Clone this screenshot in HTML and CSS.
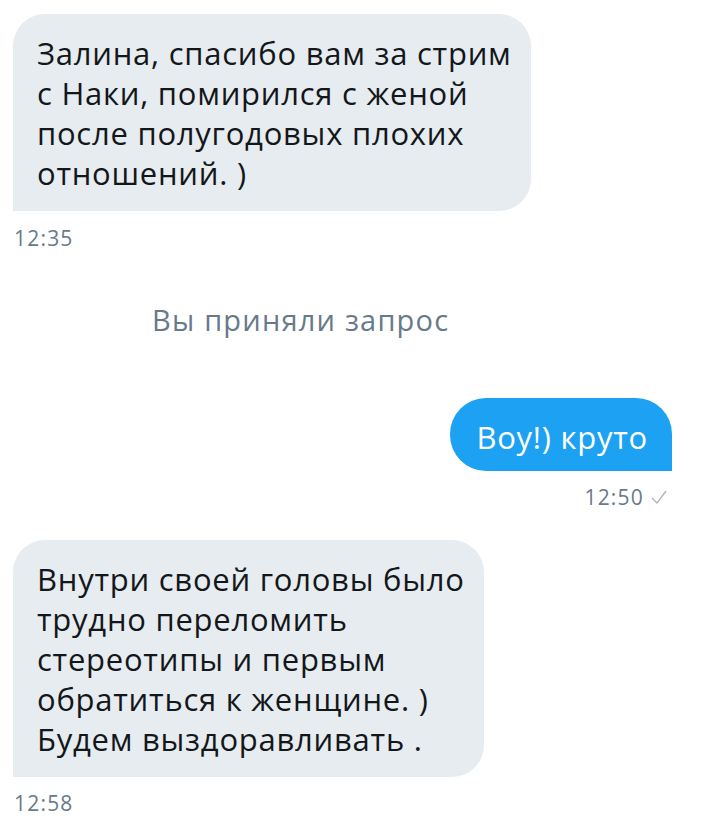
FILE: index.html
```html
<!DOCTYPE html>
<html lang="ru">
<head>
    <meta charset="UTF-8">
    <title>Сообщения</title>
    <link rel="stylesheet" href="styles.css">
</head>
<body>
    <div class="chat">
        <div class="msg msg-in">
            <div class="bubble">Залина, спасибо вам за стрим<br>с Наки, помирился с женой<br>после полугодовых плохих<br>отношений. )</div>
            <div class="time">12:35</div>
        </div>

        <div class="notice">Вы приняли запрос</div>

        <div class="msg msg-out">
            <div class="bubble">Воу!) круто</div>
            <div class="time">12:50
                <svg class="check" width="18" height="16" viewBox="0 0 18 16">
                    <polyline points="2,9 7,14 16,2" fill="none" stroke="#aab5bf" stroke-width="1.3"/>
                </svg>
            </div>
        </div>

        <div class="msg msg-in msg-last">
            <div class="bubble">Внутри своей головы было<br>трудно переломить<br>стереотипы и первым<br>обратиться к женщине. )<br>Будем выздоравливать .</div>
            <div class="time">12:58</div>
        </div>
    </div>
</body>
</html>
```

FILE: styles.css
```css
* {
    box-sizing: border-box;
}
body {
    margin: 0;
    background-color: #ffffff;
    font-family: "Open Sans", "Liberation Sans", Arial, sans-serif;
}
.chat {
    display: flex;
    flex-direction: column;
    padding: 14px 41px 0 13px;
}
.msg {
    display: flex;
    flex-direction: column;
    align-items: flex-start;
}
.msg-out {
    align-items: flex-end;
    margin-top: 62px;
}
.msg-last {
    margin-top: 31px;
}
.bubble {
    font-size: 31px;
    line-height: 40px;
    letter-spacing: 0.75px;
    color: #14171a;
    background-color: #e6ecf0;
    padding: 19px 19px 18px 24px;
    border-radius: 32px 32px 32px 0;
}
.msg-out .bubble {
    background-color: #1da1f2;
    color: #ffffff;
    padding: 19px 24px 14px 26px;
    border-radius: 36px 36px 0 36px;
}
.time {
    display: flex;
    align-items: center;
    gap: 6px;
    font-size: 21px;
    line-height: 24px;
    letter-spacing: 1.2px;
    color: #687a8a;
    margin-top: 14px;
    margin-left: 1px;
}
.msg:first-child .time {
    margin-top: 15px;
}
.msg-out .time {
    margin-right: 4px;
}
.notice {
    margin-top: 54px;
    padding-left: 139px;
    font-size: 29px;
    line-height: 32px;
    letter-spacing: 1.2px;
    color: #687a8a;
}
```
